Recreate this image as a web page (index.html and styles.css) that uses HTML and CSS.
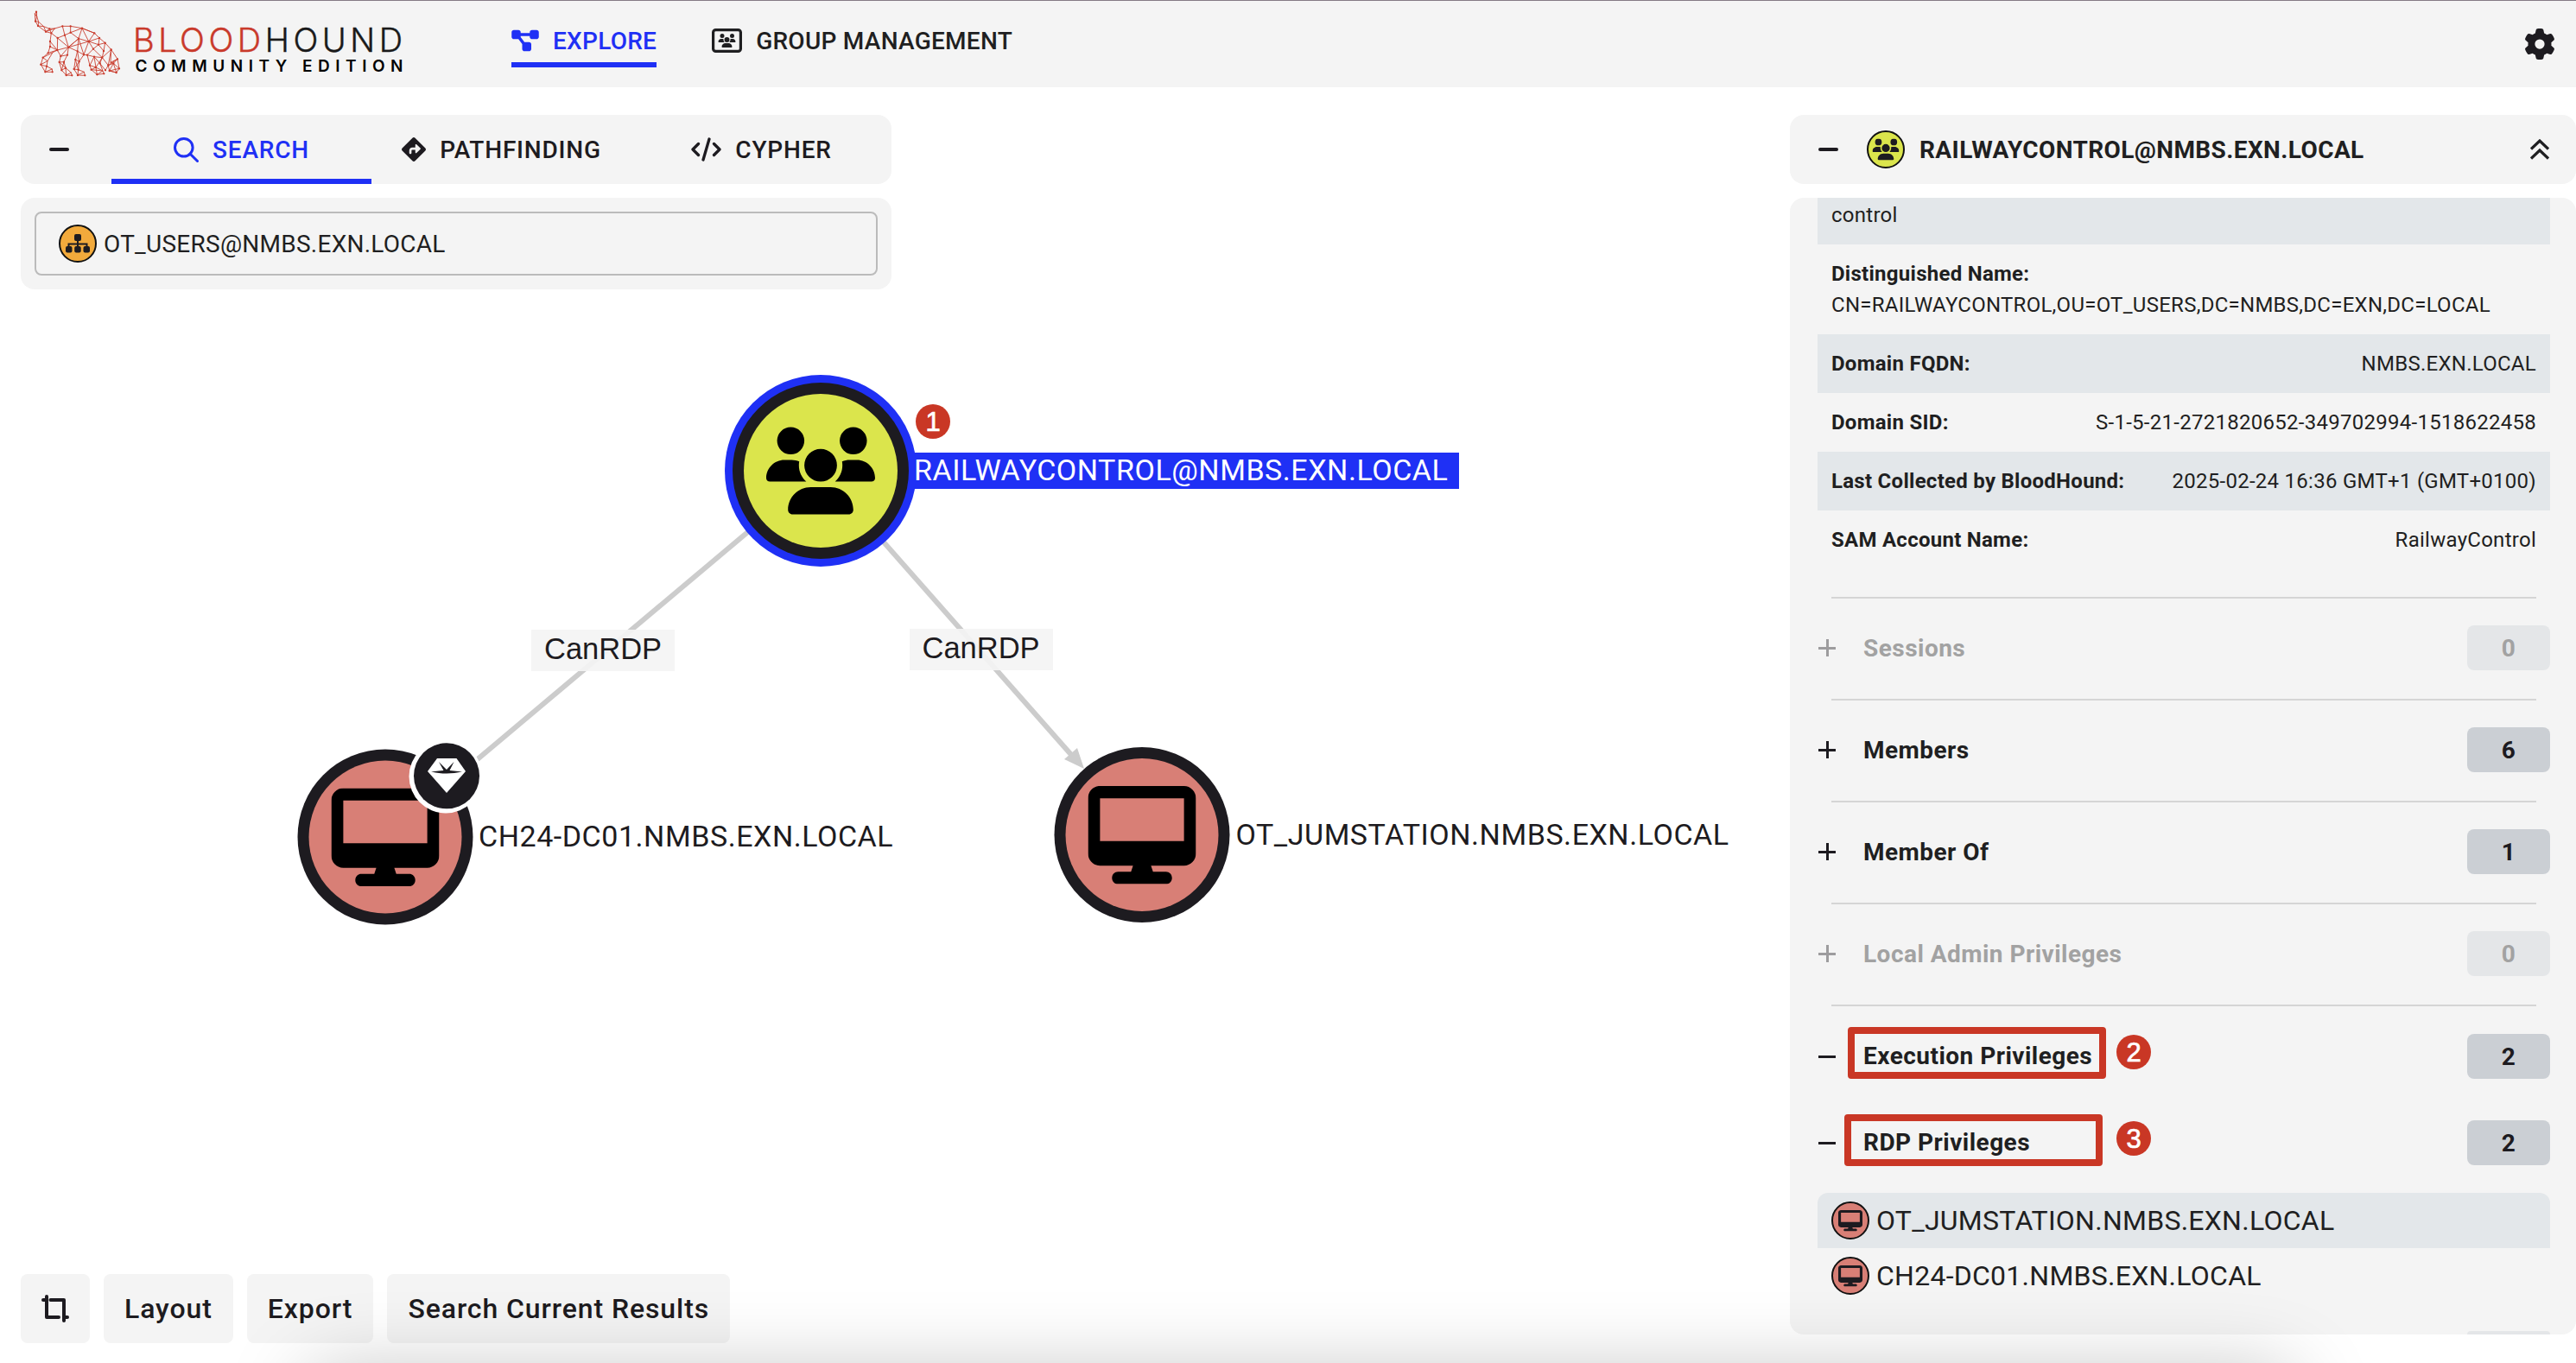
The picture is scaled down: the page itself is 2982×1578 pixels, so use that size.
FILE: index.html
```html
<!DOCTYPE html>
<html lang="en">
<head>
<meta charset="utf-8">
<title>BloodHound Community Edition</title>
<link rel="stylesheet" href="styles.css">
</head>
<body>
<svg class="sprite" aria-hidden="true">
  <symbol id="i-users" viewBox="0 0 640 512"><path d="M144 0a80 80 0 1 1 0 160A80 80 0 1 1 144 0zM512 0a80 80 0 1 1 0 160A80 80 0 1 1 512 0zM0 298.7C0 239.8 47.8 192 106.7 192h42.7c15.9 0 31 3.5 44.6 9.7c-1.3 7.2-1.9 14.7-1.9 22.3c0 38.2 16.8 72.5 43.3 96c-.2 0-.4 0-.7 0H21.3C9.6 320 0 310.4 0 298.7zM405.3 320c-.2 0-.4 0-.7 0c26.6-23.5 43.3-57.8 43.3-96c0-7.6-.7-15-1.9-22.3c13.6-6.3 28.7-9.7 44.6-9.7h42.7C592.2 192 640 239.8 640 298.7c0 11.8-9.6 21.3-21.3 21.3H405.3zM224 224a96 96 0 1 1 192 0 96 96 0 1 1 -192 0zM128 485.3C128 411.7 187.7 352 261.3 352H378.7C452.3 352 512 411.7 512 485.3c0 14.7-11.9 26.7-26.7 26.7H154.7c-14.7 0-26.7-11.9-26.7-26.7z"/></symbol>
  <symbol id="i-desktop" viewBox="0 0 576 512" preserveAspectRatio="none"><path d="M64 0C28.7 0 0 28.7 0 64V352c0 35.3 28.7 64 64 64H240l-10.7 32H160c-17.7 0-32 14.3-32 32s14.3 32 32 32H416c17.7 0 32-14.3 32-32s-14.3-32-32-32H346.7L336 416H512c35.3 0 64-28.7 64-64V64c0-35.3-28.7-64-64-64H64zM512 64V288H64V64H512z"/></symbol>
</svg>

<header class="topbar">
  <svg class="logo" viewBox="0 0 480 100" width="480" height="100">
    <g transform="translate(34 4) scale(.3333)" class="dog">
      <path d="M24 29L19 36L21 62L30 78L57 98L76 103L70 88L50 80L32 64L26 46ZM24 29L26 46M19 36L26 46L21 62L32 64L30 78L50 80L57 98L70 88M57 98L88 87L70 88M88 87L76 103"/>
      <path d="M88 87L115 79L143 79L183 86L226 103L243 120L263 137L284 160L306 193M76 103L98 120L123 110L143 101L183 86M115 79L123 110M143 79L143 101L171 122L183 86L206 132L171 122L136 152L98 120L97 162L72 132L76 103M123 110L136 152L97 162L72 150L72 132M136 152L206 132L226 103M171 122L167 166L136 152L171 122L189 178L206 132L222 158L240 143L243 120L206 132L240 143L263 137M240 143L258 165L263 137M258 165L253 188M222 158L253 188L225 185M222 158L201 179L189 178L167 166M183 86L226 103"/>
      <path d="M72 150L65 172L97 162L47 188L65 172M63 200L60 218L79 228L80 238L55 238L40 212L47 188L63 200L40 212L46 215L60 218L55 238L79 228M80 172L63 200"/>
      <path d="M97 162L109 183L132 179L136 152L109 183L104 204L120 203L132 179M120 203L126 224L145 240L148 250L128 249L112 232L104 204L126 224L112 232L120 203M126 224L128 249L145 240"/>
      <path d="M167 166L160 195L173 202L189 178M173 202L170 230L190 238L193 250L168 249L155 228L160 195L170 230L155 228L173 202M170 230L168 249L190 238M167 166L173 202"/>
      <path d="M201 179L210 215L225 185L231 222L255 234L259 244L235 247L215 230L210 215L231 222L215 230L255 234L235 247L231 222M201 179L225 185L245 208L253 188L231 222M245 208L264 232L274 215L253 188M245 208L255 234"/>
      <path d="M284 160L253 188M284 160L282 205L306 193L274 215L278 234L302 240L312 226L306 193L292 208L274 215M292 208L302 240L278 234L292 208L312 226L278 234M282 205L292 208M284 160L274 215"/>
      <path class="dots" d="M24 29h0M21 62h0M30 78h0M57 98h0M76 103h0M70 88h0M115 79h0M143 79h0M183 86h0M226 103h0M243 120h0M263 137h0M284 160h0M306 193h0M98 120h0M123 110h0M143 101h0M171 122h0M136 152h0M206 132h0M97 162h0M72 132h0M72 150h0M167 166h0M189 178h0M222 158h0M240 143h0M258 165h0M225 185h0M253 188h0M201 179h0M65 172h0M47 188h0M40 212h0M55 238h0M80 238h0M60 218h0M109 183h0M132 179h0M104 204h0M120 203h0M112 232h0M128 249h0M148 250h0M126 224h0M160 195h0M173 202h0M155 228h0M168 249h0M193 250h0M170 230h0M210 215h0M231 222h0M215 230h0M235 247h0M259 244h0M245 208h0M264 232h0M274 215h0M278 234h0M302 240h0M312 226h0M292 208h0"/>
    </g>
    <text class="brand" x="154" y="60" textLength="312"><tspan class="brand-red">BLOOD</tspan><tspan>HOUND</tspan></text>
    <text class="edition" x="156.500" y="82.500" textLength="310">COMMUNITY EDITION</text>
  </svg>
  <nav class="nav">
    <a class="nav-item active"><svg width="32" height="28" viewBox="0 0 576 512"><path fill="currentColor" d="M0 80C0 53.500 21.500 32 48 32h96c26.500 0 48 21.500 48 48V96H384V80c0-26.500 21.500-48 48-48h96c26.500 0 48 21.500 48 48v96c0 26.500-21.500 48-48 48H432c-26.500 0-48-21.500-48-48V160H192v16c0 1.700-.1 3.400-.3 5L272 288h96c26.500 0 48 21.500 48 48v96c0 26.500-21.500 48-48 48H272c-26.500 0-48-21.500-48-48V336c0-1.700 .1-3.400 .3-5L144 224H48c-26.500 0-48-21.500-48-48V80z"/></svg><span>EXPLORE</span></a>
    <a class="nav-item"><svg width="35" height="28" viewBox="0 0 35 28"><rect x="1.600" y="1.600" width="31.800" height="24.800" rx="3" fill="none" stroke="currentColor" stroke-width="3.200"/><use href="#i-users" x="5.500" y="6" width="24" height="16" fill="currentColor"/></svg><span>GROUP MANAGEMENT</span></a>
  </nav>
  <svg class="gear" width="36" height="36" viewBox="0 0 512 512"><path fill="currentColor" d="M495.900 166.600c3.200 8.700 .5 18.400-6.400 24.600l-43.300 39.400c1.100 8.300 1.700 16.800 1.700 25.400s-.6 17.100-1.700 25.400l43.300 39.400c6.900 6.200 9.600 15.900 6.400 24.600c-4.400 11.900-9.700 23.300-15.800 34.300l-4.700 8.100c-6.600 11-14 21.400-22.100 31.200c-5.900 7.200-15.700 9.600-24.500 6.800l-55.700-17.700c-13.400 10.300-28.200 18.900-44 25.400l-12.500 57.100c-2 9.100-9 16.300-18.200 17.800c-13.800 2.300-28 3.500-42.500 3.500s-28.700-1.200-42.500-3.500c-9.200-1.500-16.200-8.700-18.200-17.800l-12.500-57.100c-15.800-6.500-30.600-15.100-44-25.400L83.100 425.900c-8.800 2.800-18.600 .3-24.500-6.800c-8.100-9.800-15.500-20.200-22.100-31.200l-4.700-8.100c-6.100-11-11.400-22.400-15.800-34.300c-3.200-8.700-.5-18.400 6.400-24.600l43.300-39.400C64.600 273.100 64 264.600 64 256s.6-17.100 1.700-25.400L22.400 191.200c-6.900-6.200-9.600-15.900-6.400-24.600c4.400-11.900 9.700-23.300 15.800-34.300l4.700-8.100c6.600-11 14-21.400 22.100-31.200c5.900-7.200 15.700-9.600 24.500-6.800l55.700 17.700c13.400-10.300 28.200-18.900 44-25.400l12.500-57.100c2-9.100 9-16.300 18.200-17.800C227.300 1.200 241.500 0 256 0s28.700 1.200 42.500 3.500c9.200 1.500 16.200 8.700 18.200 17.800l12.500 57.100c15.800 6.500 30.600 15.100 44 25.400l55.700-17.700c8.800-2.800 18.600-.3 24.500 6.800c8.100 9.800 15.500 20.200 22.100 31.200l4.700 8.100c6.100 11 11.400 22.400 15.800 34.300zM256 336a80 80 0 1 0 0-160 80 80 0 1 0 0 160z"/></svg>
</header>

<main class="workspace">
  <svg class="graph" width="2060" height="1477" viewBox="0 101 2060 1477">
    <g class="edges">
      <path d="M950 545L548 883"/><path d="M950 545L1242 876"/>
      <path class="arrow" d="M1255 890L1232 879L1247 866Z"/>
    </g>
    <g class="edge-label"><rect x="615" y="729" width="166" height="48"/><text x="630" y="762.500">CanRDP</text></g>
    <g class="edge-label"><rect x="1053" y="728" width="166" height="48"/><text x="1067.500" y="761.500">CanRDP</text></g>
    <g>
      <rect x="1040" y="524" width="649" height="42" fill="#1f30f5"/>
      <circle cx="950" cy="545" r="111" fill="#1f30f5"/><circle cx="950" cy="545" r="102" fill="#1d1b20"/><circle cx="950" cy="545" r="89" fill="#dbe54c"/>
      <use href="#i-users" x="887" y="494" width="126" height="102"/>
      <text class="node-text selected" x="1058" y="556">RAILWAYCONTROL@NMBS.EXN.LOCAL</text>
    </g>
    <g>
      <circle cx="446" cy="969" r="101.500" fill="#1d1b20"/><circle cx="446" cy="969" r="88.500" fill="#d87f76"/>
      <use href="#i-desktop" x="383.500" y="912.500" width="125" height="113.500"/>
      <circle cx="516" cy="899" r="42.500" fill="#fff"/><circle cx="517" cy="898.300" r="38" fill="#1d1b20"/>
      <path fill="#fff" d="M506 878H528.500L539 893L517 918L495 893Z"/>
      <path fill="#1d1b20" d="M508 882L517 891L525.500 882L520.500 892L535 893.500Q517 897.500 499 893.500L513.500 892Z"/>
      <text class="node-text" x="554" y="979.500">CH24-DC01.NMBS.EXN.LOCAL</text>
    </g>
    <g>
      <circle cx="1322" cy="966.500" r="101.500" fill="#1d1b20"/><circle cx="1322" cy="966.500" r="88.500" fill="#d87f76"/>
      <use href="#i-desktop" x="1259.500" y="910" width="125" height="113.500"/>
      <text class="node-text" x="1430.500" y="978">OT_JUMSTATION.NMBS.EXN.LOCAL</text>
    </g>
    <g><circle cx="1080" cy="488" r="20" fill="#c93725"/><text class="step" x="1080" y="499">1</text></g>
  </svg>

  <section class="left">
    <div class="card tabs">
      <span class="collapse"><i class="dash"></i></span>
      <a class="tab active"><svg width="29" height="29" viewBox="0 0 29 29" fill="none" stroke="currentColor" stroke-width="3"><circle cx="11.800" cy="11.800" r="10.300"/><path d="M19 19l8.500 8.500" stroke-linecap="round"/></svg><span>SEARCH</span></a>
      <a class="tab"><svg width="28" height="28" viewBox="0 0 512 512"><path fill="currentColor" d="M227.700 11.700c15.600-15.600 40.900-15.600 56.600 0l216 216c15.600 15.600 15.600 40.900 0 56.600l-216 216c-15.600 15.600-40.900 15.600-56.600 0l-216-216c-15.600-15.600-15.600-40.900 0-56.600l216-216zm87.600 137c-4.600-4.600-11.500-5.900-17.400-3.500s-9.900 8.300-9.900 14.800v56H224c-35.300 0-64 28.700-64 64v48c0 13.300 10.700 24 24 24s24-10.700 24-24V280c0-8.800 7.200-16 16-16h64v56c0 6.500 3.900 12.300 9.900 14.800s12.900 1.100 17.400-3.500l80-80c6.200-6.200 6.200-16.400 0-22.600l-80-80z"/></svg><span>PATHFINDING</span></a>
      <a class="tab"><svg width="35" height="28" viewBox="0 0 35 28" fill="none" stroke="currentColor" stroke-width="3.300" stroke-linecap="round" stroke-linejoin="round"><path d="M8.500 7.500L2 14l6.500 6.500M26.500 7.500L33 14l-6.500 6.500M21 2l-7 24"/></svg><span>CYPHER</span></a>
    </div>
    <div class="card search">
      <div class="field">
        <svg width="44" height="44" viewBox="0 0 44 44"><circle cx="22" cy="22" r="21" fill="#f2aa3c" stroke="#111" stroke-width="2"/><path fill="none" stroke="#1d1b20" stroke-width="2" d="M22 18v8M11.500 26v-3.500h21V26"/><g fill="#1d1b20"><rect x="18" y="11" width="8" height="8" rx="2"/><rect x="8" y="25" width="7.500" height="7.500" rx="2"/><rect x="18.200" y="25" width="7.500" height="7.500" rx="2"/><rect x="28.500" y="25" width="7.500" height="7.500" rx="2"/></g></svg>
        <span>OT_USERS@NMBS.EXN.LOCAL</span>
      </div>
    </div>
    <div class="tools">
      <button class="tool"><svg width="32" height="32" viewBox="0 0 32 32" fill="none" stroke="currentColor" stroke-width="4" stroke-linejoin="round" stroke-linecap="round"><path d="M2 6h4M6 2v24h14M10.500 6H26v24M26 26h4"/></svg></button>
      <button class="tool">Layout</button><button class="tool">Export</button><button class="tool">Search Current Results</button>
    </div>
  </section>

  <aside class="right">
    <div class="card entity">
      <i class="dash"></i>
      <svg class="entity-icon" width="44" height="44" viewBox="0 0 44 44"><circle cx="22" cy="22" r="21" fill="#dbe54c" stroke="#111" stroke-width="2"/><use href="#i-users" x="6.500" y="9.500" width="31" height="25" fill="#1d1b20"/></svg>
      <h2>RAILWAYCONTROL@NMBS.EXN.LOCAL</h2>
      <svg class="chev" width="22" height="24" viewBox="0 0 22 24" fill="none" stroke="currentColor" stroke-width="3.200"><path d="M1 11.500L11 2l10 9.500M1 22.500L11 13l10 9.500"/></svg>
    </div>
    <div class="card details">
      <dl class="props">
        <div class="prop shaded first"><dd>control</dd></div>
        <div class="prop stack"><dt>Distinguished Name:</dt><dd>CN=RAILWAYCONTROL,OU=OT_USERS,DC=NMBS,DC=EXN,DC=LOCAL</dd></div>
        <div class="prop shaded"><dt>Domain FQDN:</dt><dd>NMBS.EXN.LOCAL</dd></div>
        <div class="prop"><dt>Domain SID:</dt><dd>S-1-5-21-2721820652-349702994-1518622458</dd></div>
        <div class="prop shaded"><dt>Last Collected by BloodHound:</dt><dd>2025-02-24 16:36 GMT+1 (GMT+0100)</dd></div>
        <div class="prop"><dt>SAM Account Name:</dt><dd>RailwayControl</dd></div>
      </dl>
      <div class="group off"><i class="plus"></i><h3>Sessions</h3><b class="count">0</b></div>
      <div class="group"><i class="plus"></i><h3>Members</h3><b class="count">6</b></div>
      <div class="group"><i class="plus"></i><h3>Member Of</h3><b class="count">1</b></div>
      <div class="group off"><i class="plus"></i><h3>Local Admin Privileges</h3><b class="count">0</b></div>
      <div class="group open"><i class="plus minus"></i><h3>Execution Privileges</h3><b class="count">2</b>
        <i class="mark mark-a"></i><svg class="pin pin-a" width="40" height="40"><circle cx="20" cy="20" r="20" fill="#c93725"/><text class="step" x="20" y="31">2</text></svg></div>
      <div class="group nested"><i class="plus minus"></i><h3>RDP Privileges</h3><b class="count">2</b>
        <i class="mark mark-b"></i><svg class="pin pin-b" width="40" height="40"><circle cx="20" cy="20" r="20" fill="#c93725"/><text class="step" x="20" y="31">3</text></svg></div>
      <ul class="hosts">
        <li><svg width="44" height="44" viewBox="0 0 44 44"><circle cx="22" cy="22" r="21" fill="#d87f76" stroke="#111" stroke-width="2"/><use href="#i-desktop" x="8" y="10" width="28" height="24.500" fill="#1d1b20"/></svg><span>OT_JUMSTATION.NMBS.EXN.LOCAL</span></li>
        <li><svg width="44" height="44" viewBox="0 0 44 44"><circle cx="22" cy="22" r="21" fill="#d87f76" stroke="#111" stroke-width="2"/><use href="#i-desktop" x="8" y="10" width="28" height="24.500" fill="#1d1b20"/></svg><span>CH24-DC01.NMBS.EXN.LOCAL</span></li>
      </ul>
      <div class="next"></div>
    </div>
  </aside>
</main>
<div class="dock"><div class="dock-shadow"></div></div>
</body>
</html>
```
FILE: styles.css
```css
* { box-sizing: border-box; }
html { overflow: hidden; }
body { margin: 0; width: 2982px; height: 1578px; overflow: hidden; background: #fff; color: #1f1f21; font-family: Roboto, "Liberation Sans", sans-serif; font-size: 28px; letter-spacing: .26px; position: relative; }
.sprite { position: absolute; width: 0; height: 0; }
svg { display: block; flex: none; letter-spacing: 0; }
h2, h3, dl, dd, dt, ul { margin: 0; padding: 0; font: inherit; }
.card { background: #f4f4f4; border-radius: 16px; }

/* Top bar */
.topbar { height: 101px; background: #f4f4f4; box-shadow: inset 0 1px #857a85; display: flex; align-items: flex-start; }
.dog path { fill: none; stroke: #c93a2b; stroke-width: 2.6; stroke-linecap: round; }
.dog .dots { stroke-width: 7; }
.brand { font: 300 38px Inter, sans-serif; fill: #1a1a1a; stroke: #1a1a1a; stroke-width: .4; }
.brand-red { fill: #c93a2b; stroke: #c93a2b; }
.edition { font: 600 19px Inter, sans-serif; fill: #000; }
.nav { display: flex; gap: 64px; margin: 22px 0 0 112px; }
.nav-item { display: flex; align-items: center; gap: 16px; height: 56px; border-bottom: 6px solid transparent; font-weight: 500; }
.nav-item.active, .tab.active { color: #1f30f5; border-color: #1f30f5; }
.gear { margin: 33px 24px 0 auto; color: #1d1b20; }

/* Graph canvas */
.workspace { height: 1477px; position: relative; display: flex; justify-content: space-between; padding: 32px 0 0 24px; }
.graph { position: absolute; left: 0; top: 0; }
.edges path { stroke: #ccc; stroke-width: 6; }
.edges .arrow { fill: #ccc; stroke: none; }
.edge-label rect { fill: #f4f4f4; fill-opacity: .92; }
.edge-label text { font: 34.5px "Liberation Sans", sans-serif; fill: #1d1b20; }
.node-text { font: 34px Roboto, sans-serif; letter-spacing: .55px; fill: #1d1b20; }
.node-text.selected { fill: #fff; }
.step { font: 31px "Liberation Sans", sans-serif; fill: #fff; stroke: #fff; stroke-width: .7; text-anchor: middle; }

/* Search column */
.left { position: relative; width: 1008px; display: flex; flex-direction: column; gap: 16px; }
.tabs { height: 80px; display: flex; }
.collapse { width: 105px; display: flex; align-items: center; padding-left: 33px; }
.dash { display: block; width: 23px; height: 4px; border-radius: 2px; background: #1d1b20; }
.tab { flex: 1 1 0; display: flex; align-items: center; justify-content: center; gap: 16px; font-weight: 500; letter-spacing: .8px; padding-top: 6px; border-bottom: 6px solid transparent; color: #1d1b20; }
.search { height: 106px; padding: 16px; }
.field { height: 74px; border: 2px solid #bbb; border-radius: 8px; display: flex; align-items: center; gap: 8px; padding-left: 26px; }
.tools { display: flex; gap: 16px; margin-top: auto; padding-bottom: 23px; }
.tool { height: 80px; border: 0; border-radius: 8px; background: #f4f4f4; padding: 0 24px; font: 500 32px Roboto, sans-serif; letter-spacing: .914px; color: #1d1b20; }

/* Entity panel */
.right { position: relative; width: 910px; display: flex; flex-direction: column; gap: 16px; padding-bottom: 33px; }
.entity { height: 80px; display: flex; align-items: center; padding: 0 31px 0 33px; }
.entity-icon { margin: 0 17px 0 33px; }
.entity h2 { font-weight: 700; letter-spacing: .4px; flex: 1; }
.details { flex: 1; overflow: hidden; padding: 0 30px 0 32px; display: flex; flex-direction: column; }
.props { font-size: 24px; line-height: 36px; letter-spacing: .27px; }
.prop { padding: 16px; display: flex; justify-content: space-between; }
.prop dt { font-weight: 700; }
.shaded { background: #e3e7ea; }
.first { padding-top: 2px; }
.stack { flex-direction: column; }
.group { position: relative; display: flex; align-items: center; height: 118px; flex: none; }
.group::before { content: ""; position: absolute; left: 16px; right: 16px; top: 0; height: 2px; background: #d5d5d5; }
.props + .group { margin-top: 32px; }
.group h3 { flex: 1; margin-left: 32px; font-weight: 700; letter-spacing: .47px; }
.plus { width: 20px; height: 20px; margin-left: 1px; background: linear-gradient(#1d1b20, #1d1b20) center / 20px 3px no-repeat, linear-gradient(#1d1b20, #1d1b20) center / 3px 20px no-repeat; }
.minus { background: linear-gradient(#1d1b20, #1d1b20) center / 20px 3px no-repeat; }
.count { width: 96px; height: 52px; border-radius: 8px; background: #cbcfd4; color: #1d1b20; display: flex; align-items: center; justify-content: center; font-weight: 700; }
.off h3 { color: #a2a2a2; }
.off .plus { opacity: .4; }
.off .count { background: #e4e6e8; color: #a2a2a2; }
.group.open { height: 86px; align-items: flex-end; }
.open h3 { margin-bottom: 10px; }
.open .plus { margin-bottom: 16px; }
.group.nested { height: 52px; margin-top: 48px; }
.nested::before { display: none; }
.nested h3 { margin-bottom: 1px; }
.mark { position: absolute; width: 299px; height: 60px; border: 8px solid #c93725; border-radius: 4px; }
.mark-a { left: 35px; top: 26px; }
.mark-b { left: 31px; top: -7px; }
.pin { position: absolute; }
.pin-a { left: 346px; top: 35px; }
.pin-b { left: 346px; top: 1px; }
.hosts { list-style: none; margin-top: 32px; font-size: 32px; flex: none; }
.hosts li { height: 64px; display: flex; align-items: center; gap: 8px; padding: 0 16px; }
.hosts li:first-child { background: #e3e7ea; border-radius: 12px 12px 0 0; }
.next { width: 96px; height: 4px; margin: 32px 0 0 auto; border-radius: 4px 4px 0 0; background: #e4e6e8; }

/* Soft shadow rising from the lower edge of the window */
.dock { position: absolute; inset: 0; overflow: hidden; pointer-events: none; }
.dock-shadow { position: absolute; left: 350px; top: 1590px; width: 2310px; height: 80px; border-radius: 40px; box-shadow: 0 0 90px rgba(0, 0, 0, .25); }
```
